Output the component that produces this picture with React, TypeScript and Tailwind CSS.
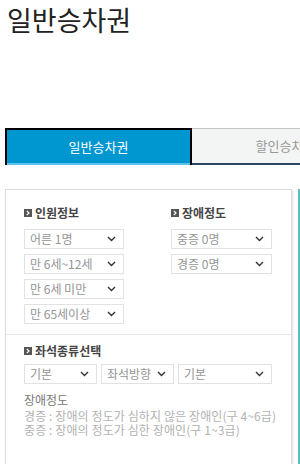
import React from 'react';

const font = { fontFamily: '"Noto Sans CJK KR", "Noto Sans", sans-serif' };

const Chevron = () => (
  <svg width="9" height="6" viewBox="0 0 9 6" className="shrink-0">
    <path d="M1 1l3.5 3.5L8 1" stroke="#333" strokeWidth="1.4" fill="none" />
  </svg>
);

const Select = ({ label, className }: { label: string; className: string }) => (
  <div
    className={`flex h-[20px] items-center justify-between border border-[#e2e2e2] bg-white pl-[5px] pr-[7px] text-[12px] leading-none text-[#949494] ${className}`}
  >
    <span>{label}</span>
    <Chevron />
  </div>
);

const Heading = ({ children }: { children: React.ReactNode }) => (
  <div className="flex h-[16px] items-center gap-[3px] text-[12px] font-bold leading-none text-[#444]">
    <span className="flex h-[8px] w-[8px] items-center justify-center bg-[#555]">
      <svg width="4" height="6" viewBox="0 0 4 6">
        <path d="M0.8 0.8L3 3L0.8 5.2" stroke="#fff" strokeWidth="1.2" fill="none" />
      </svg>
    </span>
    {children}
  </div>
);

export default function App() {
  return (
    <div className="h-[464px] w-[300px] overflow-hidden bg-white" style={font}>
      {/* Title */}
      <h1 className="pl-[7px] text-[27px] font-normal leading-[40px] text-[#222]">일반승차권</h1>

      {/* Tabs */}
      <div className="mt-[88px] flex pl-[5px]">
        <div className="flex h-[37px] w-[187px] shrink-0 flex-col border-x-2 border-t-2 border-black bg-[#0096d0]">
          <div className="flex flex-1 items-center justify-center text-[13px] text-white">일반승차권</div>
          <div className="h-[2px] bg-[#5cc3ec]" />
        </div>
        <div className="flex h-[37px] w-[187px] shrink-0 flex-col border-t border-[#c4c4c4] bg-[#f3f4f4]">
          <div className="flex flex-1 items-center justify-center text-[13px] text-[#999]">할인승차권</div>
          <div className="h-[2px] bg-[#2d4660]" />
        </div>
      </div>

      {/* Panel row */}
      <div className="mt-[24px] flex pl-[5px]">
        <div className="w-[287px] shrink-0 border border-[#dcdcdc] bg-white shadow-[1px_1px_2px_rgba(0,0,0,0.12)]">
          {/* Section 1 */}
          <div className="flex gap-[47px] pb-[10px] pl-[18px] pt-[15px]">
            <div className="flex w-[100px] flex-col gap-[5px]">
              <div className="mb-[3px]">
                <Heading>인원정보</Heading>
              </div>
              <Select label="어른 1명" className="w-[100px]" />
              <Select label="만 6세~12세" className="w-[100px]" />
              <Select label="만 6세 미만" className="w-[100px]" />
              <Select label="만 65세이상" className="w-[100px]" />
            </div>
            <div className="flex w-[101px] flex-col gap-[5px]">
              <div className="mb-[3px]">
                <Heading>장애정도</Heading>
              </div>
              <Select label="중증 0명" className="w-[101px]" />
              <Select label="경증 0명" className="w-[101px]" />
            </div>
          </div>

          {/* Section 2 */}
          <div className="border-t border-[#e6e6e6] pb-[20px] pl-[18px] pt-[8px]">
            <Heading>좌석종류선택</Heading>
            <div className="mt-[5px] flex gap-[4px]">
              <Select label="기본" className="w-[73px]" />
              <Select label="좌석방향" className="w-[73px]" />
              <Select label="기본" className="w-[94px]" />
            </div>
            <div className="mt-[9px] text-[12px] leading-[14px] text-[#777]">장애정도</div>
            <div className="mt-[2px] text-[12px] leading-[14px] tracking-[0.1px] text-[#b2b2b2]">
              <div>경증 : 장애의 정도가 심하지 않은 장애인(구 4~6급)</div>
              <div>중증 : 장애의 정도가 심한 장애인(구 1~3급)</div>
            </div>
          </div>
        </div>
        <div className="ml-[6px] h-[300px] w-[2px] shrink-0 bg-[#62b9c6]" />
      </div>
    </div>
  );
}
